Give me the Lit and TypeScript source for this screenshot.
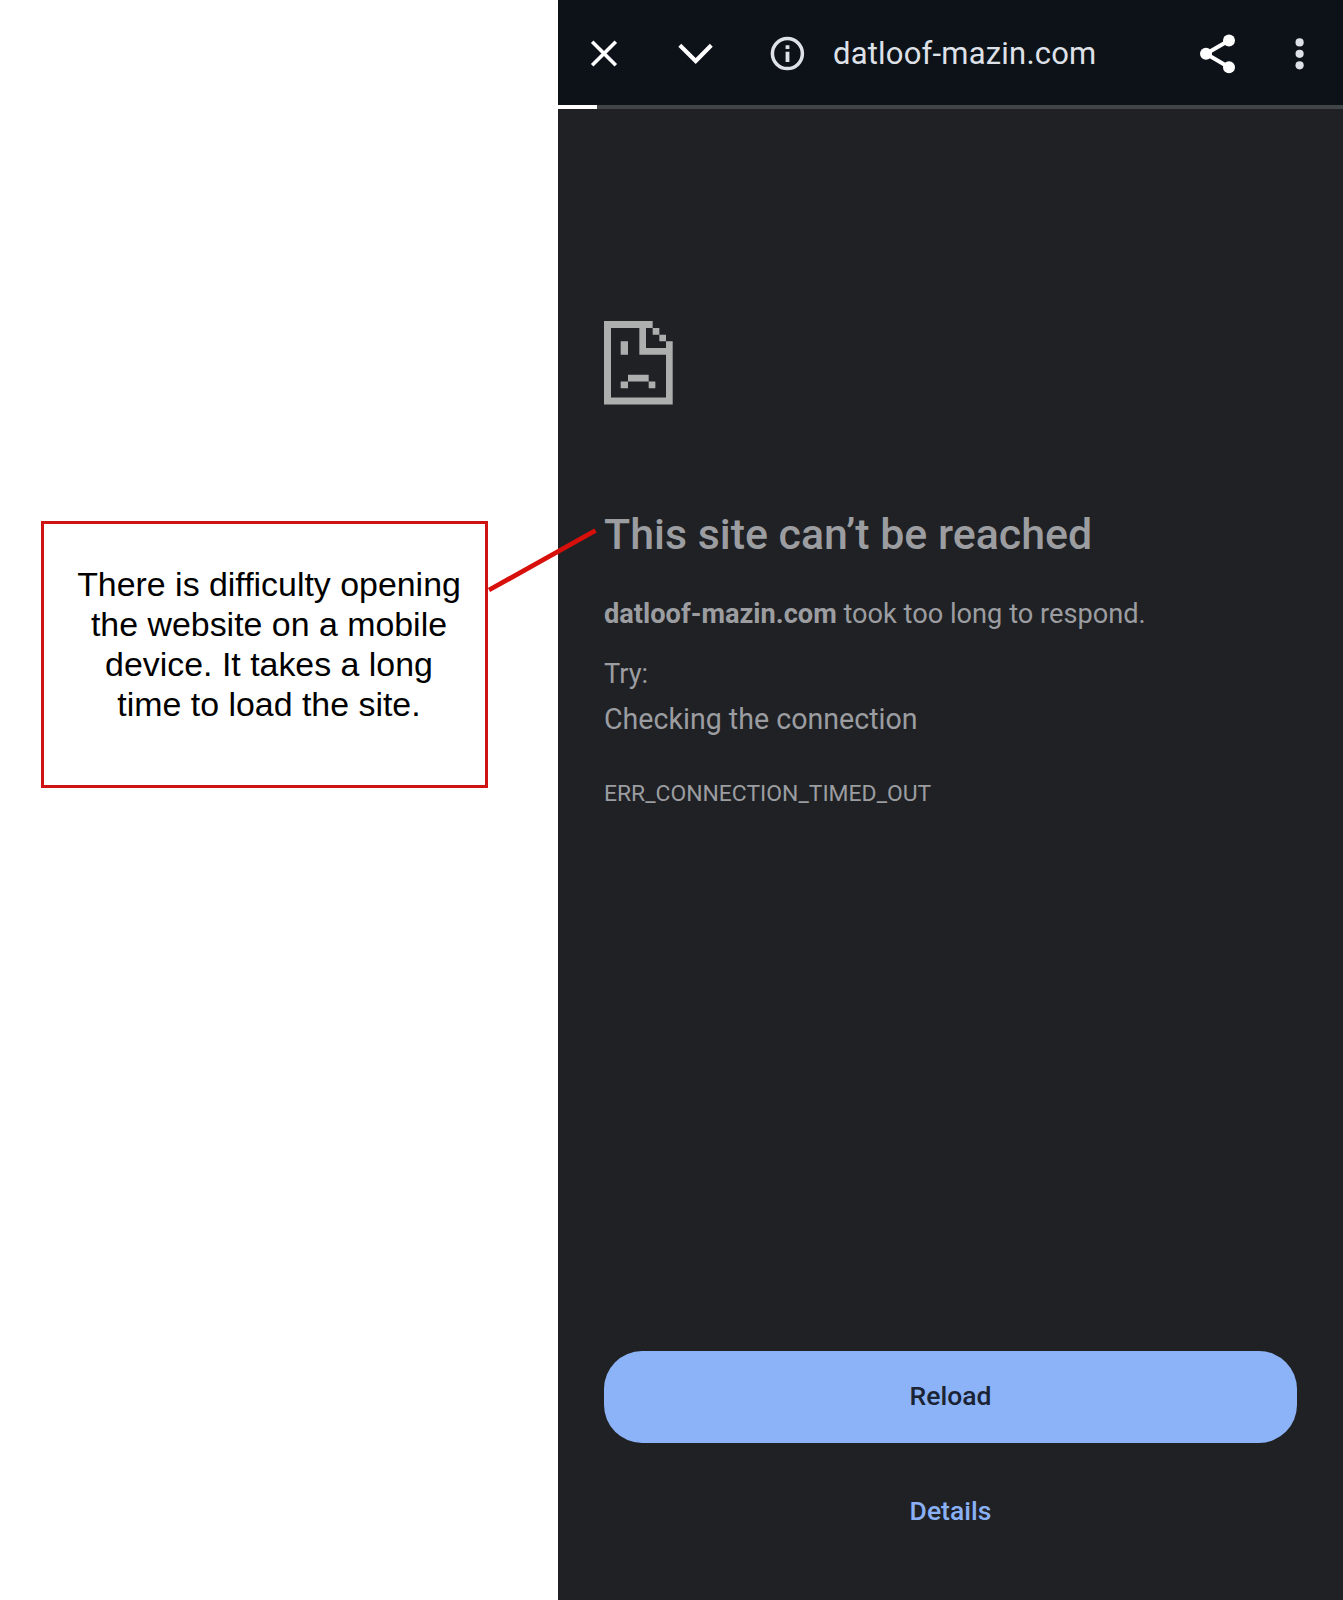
import { LitElement, html, css } from "lit";
import { customElement } from "lit/decorators.js";

@customElement("app-root")
export class AppRoot extends LitElement {
  static styles = css`
    :host {
      display: block;
      font-family: Roboto, "Liberation Sans", sans-serif;
    }
    .page {
      position: relative;
      display: grid;
      grid-template-columns: 558px 785px;
      height: 1600px;
      background: #fff;
      overflow: hidden;
    }
    .notes {
      padding: 521px 70px 0 41px;
    }
    .note {
      box-sizing: border-box;
      height: 267px;
      padding: 40px 0 0 9px;
      border: 3px solid #cf1313;
      font: 33.9px/40px "Liberation Sans", Arial, sans-serif;
      font-variant-ligatures: none;
      color: #000;
      text-align: center;
      white-space: nowrap;
    }
    .pointer {
      position: absolute;
      left: 480px;
      top: 520px;
    }
    .phone {
      display: flex;
      flex-direction: column;
      background: #202124;
      color: #9b9da1;
    }
    .bar {
      display: flex;
      align-items: center;
      height: 105px;
      background: #0d1219;
    }
    .bar svg {
      flex: none;
    }
    .close { margin-left: 26px; }
    .down { margin-left: 51px; }
    .info { margin-left: 52px; }
    .url {
      flex: 1;
      margin-left: 26px;
      padding-top: 2px;
      font-size: 31px;
      letter-spacing: 0.2px;
      line-height: 40px;
      color: #dee1e8;
      white-space: nowrap;
    }
    .share { margin-right: 42px; }
    .more { margin-right: 23px; }
    .progress {
      height: 4px;
      background: #414548;
    }
    .loaded {
      width: 39px;
      height: 4px;
      background: #fff;
    }
    .content {
      flex: 1;
      display: flex;
      flex-direction: column;
      padding: 212px 46px 0;
    }
    .sad {
      display: block;
      width: 68.7px;
      height: 83.5px;
    }
    h1 {
      margin: 99.5px 0 0;
      font-size: 42.9px;
      font-weight: 500;
      line-height: 60px;
      white-space: nowrap;
    }
    p {
      margin: 0;
      font-size: 27.2px;
      line-height: 40px;
      white-space: nowrap;
    }
    .reason { margin-top: 30px; }
    .try { margin-top: 20px; }
    .tip {
      margin-top: 5px;
      font-size: 28.6px;
    }
    .code {
      margin-top: 35px;
      font-size: 22.9px;
    }
    .actions {
      margin-top: auto;
      padding-bottom: 42px;
      display: flex;
      flex-direction: column;
      gap: 23px;
    }
    button {
      height: 92px;
      padding: 0 0 2px;
      border: 0;
      border-radius: 38px;
      background: none;
      color: #8ab1f5;
      font: 500 26.5px/40px Roboto, sans-serif;
    }
    .reload {
      background: #8cb3f8;
      color: #1b2434;
    }
  `;

  render() {
    return html`
      <div class="page">
        <div class="notes">
          <div class="note">
            There is difficulty opening<br />the website on a mobile<br />device. It takes a long<br />time to load the site.
          </div>
        </div>
        <div class="phone">
          <header class="bar">
            <svg class="close" width="40" height="40" viewBox="0 0 40 40" fill="none" stroke="#fff" stroke-width="3.6">
              <path d="M8.2 8.7 31.8 32.3M31.8 8.7 8.2 32.3" />
            </svg>
            <svg class="down" width="40" height="40" viewBox="0 0 40 40" fill="none" stroke="#fff" stroke-width="4.1">
              <path d="M4.8 12.2 20.7 28 36.3 12.2" />
            </svg>
            <svg class="info" width="40" height="40" viewBox="0 0 40 40">
              <circle cx="20.4" cy="20.6" r="15" fill="none" stroke="#dee1e8" stroke-width="3.5" />
              <path fill="#dee1e8" d="M18.6 12.3h3.8v3.8h-3.8zM18.6 18.8h3.8v10.2h-3.8z" />
            </svg>
            <div class="url">datloof-mazin.com</div>
            <svg class="share" width="40" height="42" viewBox="0 0 40 42" fill="#fff">
              <path fill="none" stroke="#fff" stroke-width="4" d="M31 8.5 8 21.8 31 35.3" />
              <circle cx="31" cy="8.5" r="6" />
              <circle cx="8" cy="21.8" r="6" />
              <circle cx="31" cy="35.3" r="6" />
            </svg>
            <svg class="more" width="40" height="40" viewBox="0 0 40 40" fill="#dee1e8">
              <circle cx="19.6" cy="9.4" r="4.1" />
              <circle cx="19.6" cy="20.8" r="4.1" />
              <circle cx="19.6" cy="32.3" r="4.1" />
            </svg>
          </header>
          <div class="progress"><div class="loaded"></div></div>
          <main class="content">
            <svg class="sad" viewBox="0 0 206 250" preserveAspectRatio="none" fill="#adafae">
              <path
                d="M0 0H146V21H166V41H186V61H206V250H0ZM21 21V229H186V101H106V21ZM126 21V81H186V61H166V41H146V21ZM50 61H72V101H50ZM72 161H134V181H154V201H134V181H72V201H50V181H72Z"
                fill-rule="evenodd"
              />
            </svg>
            <h1>This site can’t be reached</h1>
            <p class="reason"><b>datloof-mazin.com</b> took too long to respond.</p>
            <p class="try">Try:</p>
            <p class="tip">Checking the connection</p>
            <p class="code">ERR_CONNECTION_TIMED_OUT</p>
            <div class="actions">
              <button class="reload">Reload</button>
              <button>Details</button>
            </div>
          </main>
        </div>
        <svg class="pointer" width="120" height="80" viewBox="0 0 120 80">
          <path stroke="#d8100c" stroke-width="4.8" d="M9 70 115.5 10.5" />
        </svg>
      </div>
    `;
  }
}
